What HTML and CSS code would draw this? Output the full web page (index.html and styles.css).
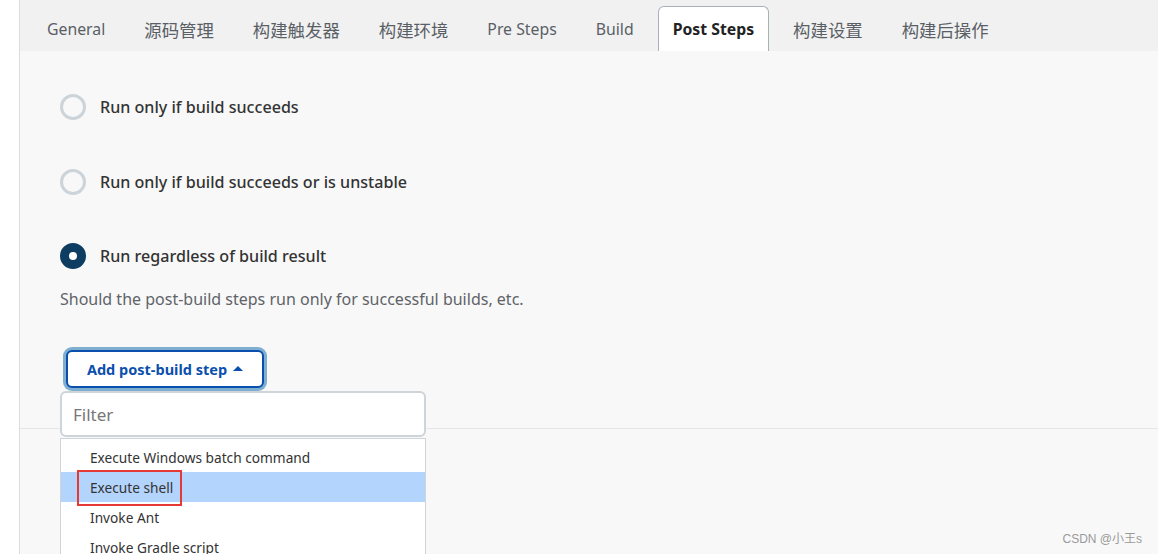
FILE: index.html
```html
<!DOCTYPE html>
<html lang="zh">
<head>
<meta charset="utf-8">
<link rel="stylesheet" href="styles.css">
</head>
<body>
<div class="page">
  <div class="gutter"></div>
  <div class="main">
    <nav class="tabs">
      <div class="tab">General</div>
      <div class="tab zh">源码管理</div>
      <div class="tab zh">构建触发器</div>
      <div class="tab zh">构建环境</div>
      <div class="tab">Pre Steps</div>
      <div class="tab">Build</div>
      <div class="tab active">Post Steps</div>
      <div class="tab zh">构建设置</div>
      <div class="tab zh">构建后操作</div>
    </nav>
    <section class="panel">
      <div class="options">
        <label class="radio"><span class="dot"></span><span class="label">Run only if build succeeds</span></label>
        <label class="radio"><span class="dot"></span><span class="label">Run only if build succeeds or is unstable</span></label>
        <label class="radio"><span class="dot checked"></span><span class="label">Run regardless of build result</span></label>
      </div>
      <p class="desc">Should the post-build steps run only for successful builds, etc.</p>
      <div class="adder">
        <button class="add-btn">Add post-build step <span class="caret"></span></button>
        <div class="menu">
          <div class="filter">Filter</div>
          <ul class="list">
            <li>Execute Windows batch command</li>
            <li class="hl"><span class="mark">Execute shell</span></li>
            <li>Invoke Ant</li>
            <li>Invoke Gradle script</li>
          </ul>
        </div>
      </div>
    </section>
    <div class="divider"></div>
  </div>
</div>
<div class="watermark">CSDN @小王s</div>
</body>
</html>
```

FILE: styles.css
```css
html, body {
  margin: 0;
  height: 100%;
  overflow: hidden;
}
body {
  font-family: "Noto Sans", "Noto Sans CJK SC", sans-serif;
  color: #333;
  background: #fff;
}
.page {
  display: flex;
  height: 554px;
}
.gutter {
  width: 19px;
  background: #fff;
  border-right: 1px solid #dcdcdc;
}
.main {
  flex: 1;
  background: #f8f8f8;
}
.tabs {
  height: 51px;
  background: #f1f1f1;
  display: flex;
  align-items: flex-end;
  gap: 9px;
  padding-left: 12px;
  box-sizing: border-box;
}
.tab {
  height: 45px;
  padding: 0 14px;
  display: flex;
  align-items: center;
  font-size: 15.8px;
  color: #5a5f66;
  box-sizing: border-box;
  border: 1px solid transparent;
  border-bottom: none;
}
.tab.zh {
  font-size: 17.4px;
}
.tab.active {
  background: #fff;
  border-color: #a8b0b8;
  border-radius: 6px 6px 0 0;
  font-weight: 700;
  color: #222;
}
.panel {
  padding: 43px 0 0 40px;
}
.options {
  display: flex;
  flex-direction: column;
  gap: 48.5px;
}
.radio {
  display: flex;
  align-items: center;
  height: 26px;
  gap: 14px;
}
.dot {
  width: 26px;
  height: 26px;
  box-sizing: border-box;
  border-radius: 50%;
  border: 3px solid #ccd4da;
  background: #f8f8f8;
}
.dot.checked {
  border: 9px solid #0e3d62;
  background: #fff;
}
.label {
  font-size: 16.1px;
  font-weight: 500;
  color: #333;
}
.desc {
  margin: 19px 0 0;
  font-size: 16px;
  line-height: 22px;
  color: #5f6368;
}
.adder {
  position: relative;
  margin-top: 40px;
  padding-left: 6px;
  height: 38px;
}
.add-btn {
  width: 198px;
  height: 38px;
  box-sizing: border-box;
  border: 2px solid #0b4fae;
  border-radius: 6px;
  background: #fff;
  box-shadow: 0 0 0 3px #7eafd1;
  color: #0b4fae;
  font-family: inherit;
  font-size: 14.5px;
  font-weight: 700;
  display: flex;
  align-items: center;
  justify-content: center;
  gap: 6px;
  padding: 0;
}
.caret {
  width: 0;
  height: 0;
  border-left: 5px solid transparent;
  border-right: 5px solid transparent;
  border-bottom: 5px solid #0b4fae;
  margin-top: -2px;
}
.menu {
  position: absolute;
  left: 0;
  top: 41px;
  width: 366px;
  z-index: 2;
}
.filter {
  height: 46px;
  box-sizing: border-box;
  border: 2px solid #cfd4d8;
  border-radius: 6px;
  background: #fff;
  padding-left: 11px;
  display: flex;
  align-items: center;
  font-size: 17px;
  color: #777;
}
.list {
  list-style: none;
  margin: 1px 0 0;
  padding: 3px 0 0;
  background: #fff;
  border: 1px solid #cfd4d8;
  border-bottom: none;
  height: 120px;
  box-sizing: border-box;
  overflow: hidden;
}
.list li {
  height: 30px;
  display: flex;
  align-items: center;
  padding-left: 29px;
  font-size: 13.7px;
  color: #333;
}
.list li.hl {
  background: #b3d4fc;
  position: relative;
}
.mark {
  position: relative;
}
.mark::after {
  content: "";
  position: absolute;
  left: -13px;
  right: -9px;
  top: -8px;
  bottom: -9px;
  border: 2px solid #e53935;
}
.divider {
  margin-top: 40px;
  height: 1px;
  background: #e6e6e6;
}
.watermark {
  position: absolute;
  right: 16px;
  bottom: 8px;
  font-family: "Liberation Sans", "Noto Sans CJK SC", sans-serif;
  font-size: 12px;
  color: #9a9a9a;
}
```
